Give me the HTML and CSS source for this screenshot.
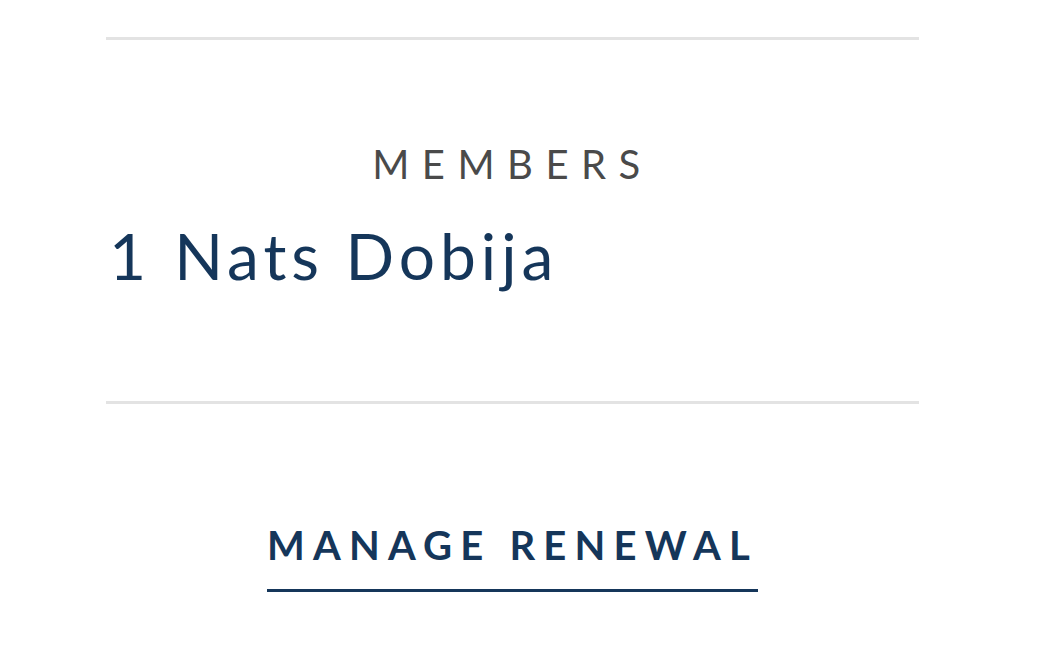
FILE: index.html
```html
<!DOCTYPE html>
<html lang="en">
<head>
    <meta charset="UTF-8">
    <meta name="viewport" content="width=device-width, initial-scale=1.0">
    <title>Membership</title>
    <link rel="stylesheet" href="styles.css">
</head>
<body>

    <div class="container">
        <!-- Members list -->
        <section class="members">
            <h2 class="members-title">Members</h2>
            <div class="member-row">
                <span class="member-count">1</span>
                <span class="member-name">Nats Dobija</span>
            </div>
        </section>

        <!-- Renewal link -->
        <div class="actions">
            <a class="renewal-link" href="#">Manage Renewal</a>
        </div>
    </div>

</body>
</html>
```

FILE: styles.css
```css
body {
    margin: 0;
    background-color: #fff;
    font-family: Lato, "Open Sans", sans-serif;
}

.container {
    width: 813px;
    margin-left: 106px;
    padding-top: 37px;
}

.members {
    border-top: 3px solid #e3e3e3;
    border-bottom: 3px solid #e3e3e3;
    padding: 100px 0 106px;
}

.members-title {
    margin: 0 0 30px;
    text-align: center;
    text-transform: uppercase;
    font-size: 40px;
    font-weight: 400;
    line-height: 1.2;
    letter-spacing: 12.5px;
    color: #4a4a4a;
}

.member-row {
    display: flex;
    gap: 23px;
    padding-left: 3px;
    font-size: 64px;
    line-height: 1.2;
    letter-spacing: 5px;
    color: #15365a;
}

.actions {
    padding-top: 117px;
    text-align: center;
}

.renewal-link {
    display: inline-block;
    padding-bottom: 20px;
    border-bottom: 3px solid #15365a;
    font-size: 40px;
    font-weight: 700;
    line-height: 1.2;
    letter-spacing: 8.2px;
    text-transform: uppercase;
    text-decoration: none;
    color: #15365a;
}
```
